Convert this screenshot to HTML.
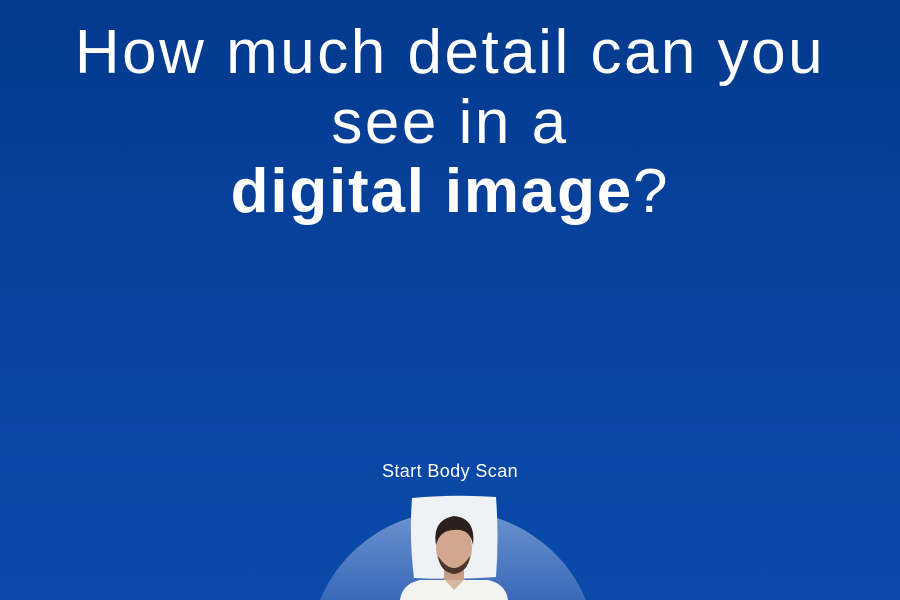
<!DOCTYPE html>
<html><head><meta charset="utf-8"><style>
html,body{margin:0;padding:0;width:900px;height:600px;overflow:hidden}
body{position:relative;background:linear-gradient(180deg,#033a8e 0%,#0845a3 60%,#0b4aa9 100%);font-family:"Liberation Sans",sans-serif;color:#fff}
.wrap{position:absolute;left:0;top:0;width:900px;height:600px;overflow:hidden}
.t{position:absolute;left:0;width:900px;text-align:center;font-size:62px;letter-spacing:2.5px;line-height:70px;white-space:nowrap}
.s{position:absolute;left:0;width:900px;text-align:center;top:460px;font-size:18px;letter-spacing:.4px;line-height:22px}
</style></head><body><div class="wrap">
<div class="t" style="top:18px">How much detail can you</div>
<div class="t" style="top:88px">see in a</div>
<div class="t" style="top:157px;letter-spacing:1.8px"><b>digital image</b>?</div>
<div class="s">Start Body Scan</div>
<svg style="position:absolute;left:0;top:0" width="900" height="600">
<defs><linearGradient id="g" x1="0" y1="0" x2="0" y2="1"><stop offset="0" stop-color="#6b93cf"/><stop offset="1" stop-color="#3a69b8"/></linearGradient></defs>
<path d="M320 600 A144 144 0 0 1 586 600 Z" fill="url(#g)"/>
<path d="M412 498 Q454 494 496 497 Q499 538 496 577 Q454 580 414 578 Q409 538 412 498Z" fill="#eef2f5"/>
<path d="M400 600 Q402 584 420 580 L488 580 Q506 584 508 600Z" fill="#f3f3f1"/>
<path d="M443 578 L454 590 L466 578 Z" fill="#d6b79e"/>
<rect x="444" y="560" width="20" height="20" fill="#c99e86"/>
<ellipse cx="454" cy="548" rx="18" ry="25" fill="#d3a68e"/>
<path d="M436 545 Q432 520 454 516 Q476 518 473 545 Q470 528 454 530 Q440 530 436 545Z" fill="#2a1f1a"/>
<path d="M438 556 Q454 580 470 556 Q468 572 454 574 Q440 572 438 556Z" fill="#4a3529"/>
</svg>
</div></body></html>
